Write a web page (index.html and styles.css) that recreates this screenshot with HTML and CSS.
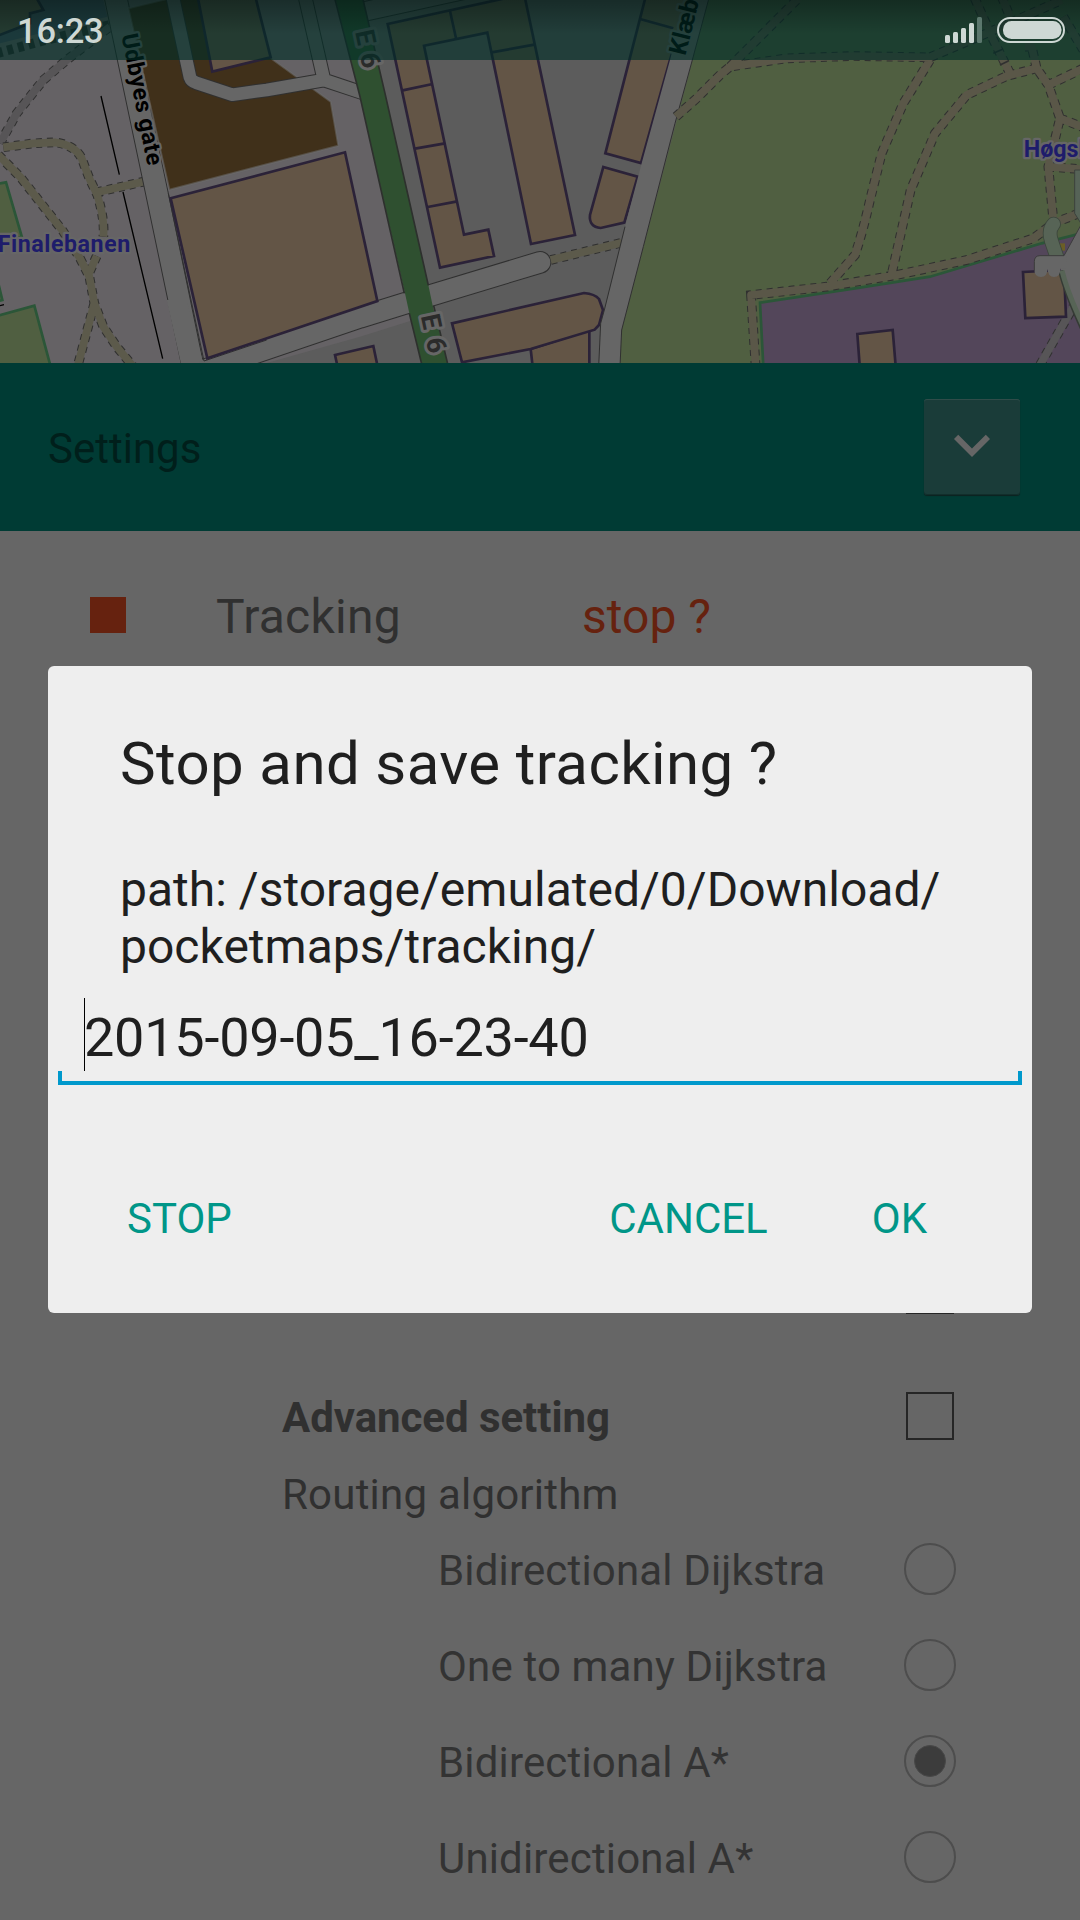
FILE: index.html
```html
<!DOCTYPE html>
<html lang="en">
<head>
<meta charset="utf-8">
<title>Settings</title>
<link rel="stylesheet" href="styles.css">
</head>
<body>
<div class="screen">
  <header class="statusbar">
    <span class="clock">16:23</span>
    <svg class="signal" viewBox="0 0 37 26" width="37" height="26">
      <g fill="#ced8d4"><rect x="0" y="18" width="5" height="8" rx="1.5"/><rect x="8" y="15" width="5" height="11" rx="1.5"/><rect x="16" y="11" width="5" height="15" rx="1.5"/><rect x="24" y="6" width="5" height="20" rx="1.5"/></g>
      <rect x="32" y="0" width="5" height="26" rx="1.5" fill="#5b776d"/>
    </svg>
    <svg class="battery" viewBox="0 0 68 26" width="68" height="26">
      <rect x="1" y="1" width="66" height="24" rx="12" fill="none" stroke="#ced8d4" stroke-width="2"/>
      <rect x="6" y="4" width="58.5" height="18" rx="8.5" fill="#ced8d4"/>
    </svg>
  </header>

  <svg class="map" viewBox="0 0 3240 1089" width="1080" height="363">
    <rect width="3240" height="1089" fill="#656265"/>
    <polygon points="1090,0 2140,0 1860,1089 800,1089 1080,1010 1240,960" fill="#5c5c5c"/>
    <polygon points="2125,0 3240,0 3240,1089 1860,1089 1865,990" fill="#505f41"/>

    <!-- sports grounds and blocks on the west side -->
    <polygon points="0,130 322,50 310,0 0,0" fill="#4a4f60"/>
    <polygon points="-9,108 90,70 90,40 130,30 108,-9 -9,-9" class="building"/>
    <g class="pitch">
      <polygon points="-10,552 18,547 66,712 -10,712"/>
      <polygon points="-10,948 103,917 152,1100 -10,1100"/>
      <polygon points="-10,850 -4,855 7,900 -10,904"/>
    </g>
    <path d="M0,917L12,914M303,288L358,524M369,576L488,1076" stroke="#000" stroke-width="4" fill="none"/>

    <!-- footpaths west -->
    <g class="dash"><path d="M0,430L50,340L130,240L200,180L330,80M-10,160L130,122L330,75"/></g>
    <g class="trail gray"><path d="M0,430L50,340L130,240L200,180L330,80"/></g>
    <g class="dash"><path d="M10,442L100,430L165,427Q225,435 245,475L268,535L292,585Q315,660 310,710M290,577L430,545M-5,465L60,530L190,695L240,775L268,830L283,910L310,980L350,1040L398,1098M290,768L265,825M283,910L233,1098"/></g>
    <g class="trail"><path d="M10,442L100,430L165,427Q225,435 245,475L268,535L292,585Q315,660 310,710M290,577L430,545M-5,465L60,530L190,695L240,775L268,830L283,910L310,980L350,1040L398,1098M290,768L265,825M283,910L233,1098"/></g>

    <!-- Udbyes gate -->
    <polygon points="312,-10 381,-10 505,580 612,1098 545,1098 428,540 352,180" fill="#666" stroke="#303030" stroke-width="3"/>

    <polygon points="385,25 500,-3 620,-3 820,180 992,305 1015,437 508,569" fill="#40301a" stroke="#6b6b6b" stroke-opacity=".55" stroke-width="6"/>
    <polygon points="593,-10 637,215 812,172 766,-10" class="building"/>
    <g fill="none" stroke-linejoin="round">
      <path d="M518,-10L570,232Q574,244 588,248L697,284L800,270L972,240L1095,281M915,-10L972,240" stroke="#303030" stroke-width="44"/>
      <path d="M518,-10L570,232Q574,244 588,248L697,284L800,270L972,240L1095,281M915,-10L972,240" stroke="#666" stroke-width="38"/>
    </g>

    <!-- cross street -->
    <g fill="none" stroke-linecap="round" stroke-linejoin="round">
      <path d="M560,1128L1080,952L1290,887L1620,787" stroke="#303030" stroke-width="68"/>
      <path d="M560,1128L1080,952L1290,887L1620,787" stroke="#666" stroke-width="62"/>
      <path d="M1060,42L1500,-55" stroke="#303030" stroke-width="62"/>
      <path d="M1060,42L1500,-55" stroke="#666" stroke-width="56"/>
    </g>
    <polygon points="545,1100 500,900 560,900 608,1083 560,1100" fill="#666"/>
    <path d="M505,580L612,1083L800,1020" fill="none" stroke="#303030" stroke-width="3"/>
    <polygon points="512,595 1035,457 1132,903 622,1075" class="building"/>
    <polygon points="1005,1065 1120,1038 1135,1110 1015,1110" class="building"/>

    <!-- E 6 trunk road -->
    <polygon points="1005,-10 1088,-10 1155,280 1285,855 1298,917 1345,1100 1267,1100 1228,940 1215,880 1080,290" fill="#2f5030"/>
    <path d="M1003,-10L1080,290L1213,880M1228,940L1267,1100M1087,-10L1155,280L1285,856M1301,917L1345,1100" fill="none" stroke="#2d302d" stroke-width="5"/>

    <!-- city blocks -->
    <g transform="translate(1080 0)">
      <g class="building">
        <path d="M83,72L430,-4L494,-10L645,705L513,732L382,98L192,137L312,704L385,689L402,768L240,803Z"/>
        <path d="M270,33L288,115M395,157L523,134M128,271L218,252M165,446L255,430M203,621L292,604" fill="none"/>
        <path d="M857,-10L736,460L843,489L930,180L990,-10Z"/>
        <path d="M840,57L940,85" fill="none"/>
        <path d="M730,501L833,530L793,668L722,684Q686,680 690,645Z"/>
        <path d="M512,1047L518,1100L688,1100L688,990Z"/>
        <path d="M276,970L672,879Q705,882 717,897L729,930L717,975L704,989L512,1047L306,1087Z"/>
      </g>
      <g class="dash"><path d="M572,780L785,728"/></g>
      <g class="trail"><path d="M572,780L785,728"/></g>
      <path d="M1048,-10L997,180L945,370L850,740L785,990L780,1100L716,1100L722,970L733,930L795,680L845,490L930,180L978,-10Z" fill="#666"/>
      <path d="M1048,-10L997,180L945,370L850,740L785,990L780,1100M716,1100L722,970L733,930L795,680" fill="none" stroke="#303030" stroke-width="3"/>
    </g>

    <!-- park and school grounds -->
    <g transform="translate(2160 0)">
      <polygon points="120,908 400,866 630,830 965,730 1090,698 1090,1100 130,1100" fill="#53465a" stroke="#2b5638" stroke-width="8"/>
      <g class="dash">
        <path d="M960,1095L1060,920"/>
        <path id="parkpaths" d="M-132,350L-70,295L0,225L30,200L200,175L400,168L630,172L800,100L1025,0M30,200L235,-5M630,180L550,310L485,460L450,600Q430,690 405,765L330,850M950,205L860,228L740,285L645,400L572,570L515,822M107,1100L93,885L320,860L530,825L740,780L940,715L1000,670L1090,635M845,-10L870,50M915,140L935,140L950,205L985,255L1020,355L985,500L1000,660M985,255L1090,205M1020,355L1090,382M985,500L1090,508M870,220L820,120L762,-10M1090,150L1030,50"/>
      </g>
      <g class="trail gray"><path d="M960,1095L1060,920"/></g>
      <g class="trail park"><use href="#parkpaths"/></g>
      <path d="M820,160L848,148M840,195L865,183" stroke="#303030" stroke-width="5"/>
      <rect x="1015" y="730" width="20" height="22" fill="#6b5e26"/>
      <g class="building">
        <polygon points="412,1002 518,990 528,1110 420,1110"/>
        <polygon points="909,816 1032,810 1038,950 916,954"/>
      </g>
      <path d="M1095,510L1064,510L1064,640L1095,690Z" fill="#566357" stroke="#3c423d" stroke-width="3"/>
      <path d="M1001,672Q984,690 994,722L1012,775" fill="none" stroke="#3c463c" stroke-width="44" stroke-linecap="round"/>
      <path d="M1001,672Q984,690 994,722L1012,775" fill="none" stroke="#576456" stroke-width="39" stroke-linecap="round"/>
      <path d="M1020,815Q1038,878 1090,995L1090,662L1032,767Z" fill="#666"/>
      <path d="M1022,812Q1038,878 1090,990" fill="none" stroke="#353b35" stroke-width="16"/>
      <path d="M1026,812Q1042,878 1094,988" fill="none" stroke="#576456" stroke-width="15"/>
      <path d="M943,785Q943,767 960,767L1040,767L1040,806L1021,806Q1021,831 1002,831Q984,831 983,806Q982,831 963,831Q943,831 943,808Z" fill="#666"/>
      <path d="M943,812L943,785Q943,767 960,767L1032,767L1090,662" fill="none" stroke="#3c3c3c" stroke-width="3"/>
    </g>

    <!-- labels -->
    <g class="street">
      <text transform="translate(364 106) rotate(78.6)" textLength="401" fill="#000">Udbyes gate</text>
      <text transform="translate(2056 169) rotate(-76)" class="klaebu" fill="#000">Klæbu</text>
      <text transform="translate(1065 95) rotate(78)" class="ref" textLength="116">E 6</text>
      <text transform="translate(1262 948) rotate(78)" class="ref" textLength="118">E 6</text>
      <text x="-7" y="755" class="place" textLength="398">Finalebanen</text>
      <text x="3071" y="470" class="place">Høgskolen</text>
    </g>
  </svg>

  <section class="titlebar">
    <h1>Settings</h1>
    <button class="collapse" aria-label="Collapse">
      <svg viewBox="0 0 24 24" width="72" height="72"><path d="M16.59 8.59L12 13.17 7.41 8.59 6 10l6 6 6-6z" fill="#666"/></svg>
    </button>
  </section>

  <main class="panel">
    <div class="tracking">
      <i class="record"></i>
      <span class="label name">Tracking</span>
      <span class="label stop">stop ?</span>
    </div>
    <div class="row covered"><i class="checkbox"></i></div>
    <div class="row advanced"><b class="label">Advanced setting</b><i class="checkbox"></i></div>
    <div class="row heading"><span class="label">Routing algorithm</span></div>
    <div class="row option"><span class="label">Bidirectional Dijkstra</span><i class="radio"></i></div>
    <div class="row option"><span class="label">One to many Dijkstra</span><i class="radio"></i></div>
    <div class="row option"><span class="label">Bidirectional A*</span><i class="radio checked"></i></div>
    <div class="row option"><span class="label">Unidirectional A*</span><i class="radio"></i></div>
  </main>

  <div class="dialog" role="dialog">
    <h2>Stop and save tracking ?</h2>
    <p>path: /storage/emulated/0/Download/<br>pocketmaps/tracking/</p>
    <div class="field"><i class="caret"></i><span class="value">2015-09-05_16-23-40</span></div>
    <div class="actions">
      <button class="neutral">STOP</button>
      <button class="negative">CANCEL</button>
      <button class="positive">OK</button>
    </div>
  </div>
</div>
</body>
</html>
```
FILE: styles.css
```css
*, *::before, *::after { box-sizing: border-box; }
body { margin: 0; background: #666; font-family: Roboto, "Liberation Sans", sans-serif; }
h1, h2, p { margin: 0; font-weight: 400; }
button { border: 0; padding: 0; background: none; font: inherit; color: inherit; }

.screen { position: relative; width: 1080px; height: 1920px; overflow: hidden; background: #666; }

.statusbar {
  position: absolute; inset: 0 0 auto 0; z-index: 1;
  display: flex; align-items: center;
  height: 60px; padding: 0 15px 0 17px;
  background:
    linear-gradient(rgba(0, 0, 0, .3), rgba(0, 0, 0, 0) 34px),
    rgba(0, 44, 38, .63);
}
.clock { padding-top: 2px; font-size: 34.5px; line-height: 60px; font-weight: 500; letter-spacing: -.2px; color: #ced8d4; margin-right: auto; }
.signal { margin: 0 15px 0 0; }

.map { display: block; }
.building { fill: #635546; stroke: #2b2238; stroke-width: 8; }
.pitch { fill: #505f41; stroke: #2b5638; stroke-width: 8; }
.dash { fill: none; stroke: #303030; stroke-width: 29; stroke-dasharray: 18 15; }
.trail { fill: none; stroke: #5c5a4b; stroke-width: 23; stroke-linejoin: round; }
.trail.gray { stroke: #575557; }
.trail.park { stroke: #5a5748; }
.street { font-size: 70px; font-weight: 700; paint-order: stroke; stroke: #666; stroke-width: 14; stroke-linejoin: round; }
.klaebu { font-size: 74px; }
.ref { fill: #2b2b2b; font-size: 80px; font-weight: 700; stroke-width: 18; }
.place { fill: #1e1c6b; }

.titlebar {
  display: flex; align-items: center; justify-content: space-between;
  height: 168px; padding: 0 60px 0 48px; background: #003b34;
}
.titlebar h1 { font-size: 42px; line-height: 50px; padding-top: 3px; color: #001f1b; }
.collapse {
  display: flex; align-items: flex-start; justify-content: center;
  width: 96px; height: 96px; padding-top: 10px; border-radius: 3px; background: #1a3c39;
  box-shadow: inset 0 1px 0 #2f4c49, inset 0 -1px 0 #122e2b, 0 1px 1px #0d2220;
}

.panel { color: #303030; font-size: 42px; }
.label { padding-top: 3px; line-height: 50px; }
.tracking { display: grid; grid-template-columns: 36px 1fr 498px; align-items: center; height: 168px; padding-left: 90px; font-size: 48px; }
.name { padding-left: 90px; letter-spacing: .25px; }
.record { width: 36px; height: 36px; background: #66220f; }
.stop { color: #66220f; }
.row { display: flex; align-items: center; justify-content: space-between; height: 96px; padding: 0 126px 0 282px; }
.covered { margin-top: 543px; justify-content: flex-end; }
.advanced { margin-top: 30px; letter-spacing: -.06px; }
.heading { height: 57px; letter-spacing: .22px; }
.heading .label { padding-top: 5px; }
.option { padding: 0 124px 0 438px; letter-spacing: .16px; color: #333; }
.checkbox { width: 48px; height: 48px; border: 2px solid #262626; }
.radio { display: flex; align-items: center; justify-content: center; width: 52px; height: 52px; border: 2px solid #4d4d4d; border-radius: 50%; }
.radio.checked::after { content: ""; width: 32px; height: 32px; border-radius: 50%; background: #3c3c3c; border: 1px solid #484848; }

.dialog {
  position: absolute; left: 48px; top: 666px; z-index: 2;
  display: flex; flex-direction: column;
  width: 984px; height: 647px; padding: 63px 10px 46px;
  border-radius: 6px; background: #eee; color: #1f1f1f;
}
.dialog h2 { padding-left: 62px; font-size: 60px; line-height: 70px; letter-spacing: .38px; }
.dialog p { padding-left: 62px; margin-top: 62px; font-size: 48px; line-height: 57px; letter-spacing: .02px; }
.field { position: relative; display: flex; margin-top: 23px; height: 87px; padding-left: 26px; font-size: 54px; line-height: 67px; letter-spacing: -.23px; }
.field::after { content: ""; position: absolute; inset: auto 0 0 0; height: 14px; border: solid #09c; border-width: 0 4px 4px; }
.caret { width: 1px; height: 73px; margin-right: -1px; background: #000; }
.value { padding-top: 6px; }
.actions { display: flex; align-items: center; height: 96px; margin-top: 85px; padding: 0 95px 0 69px; font-size: 42px; color: #009688; }
.negative { margin-left: auto; margin-right: 104px; }
```
